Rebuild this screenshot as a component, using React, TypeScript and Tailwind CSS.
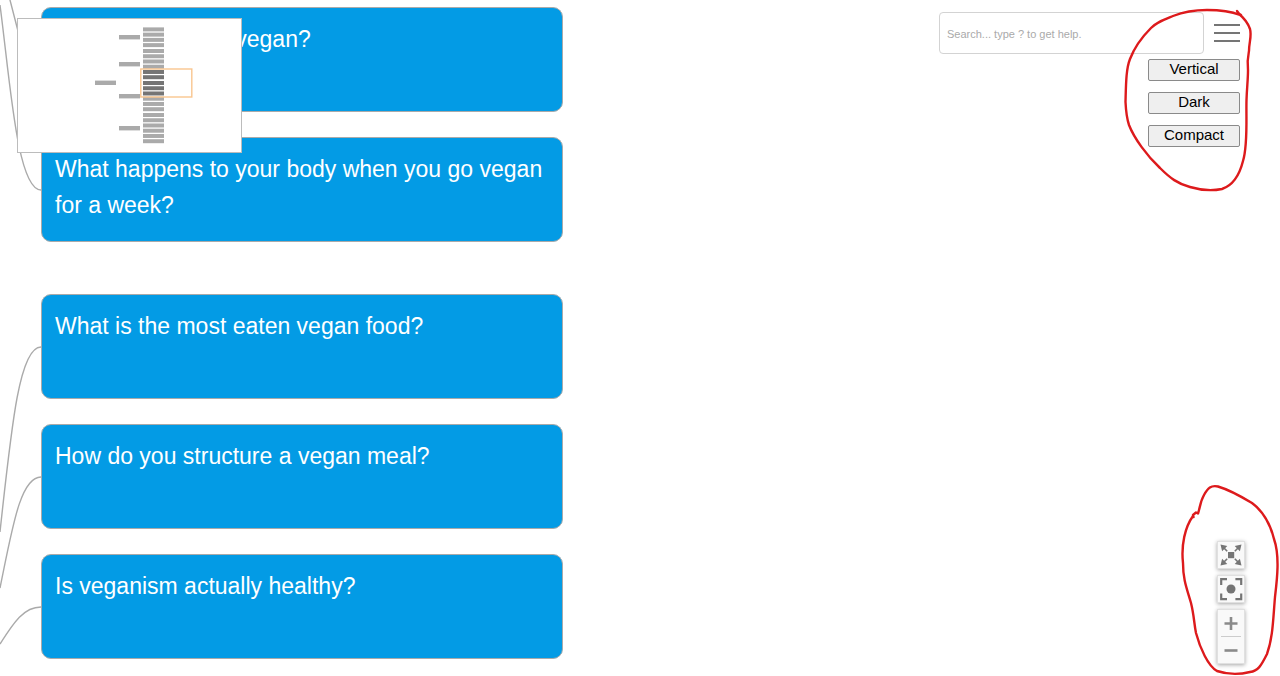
import * as React from "react";

interface QuestionGroup {
    id: string;
    questions: string[];
}

// Questions are grouped by their parent node
const groups: QuestionGroup[] = [
    {
        id: "first",
        questions: [
            "Is it healthy to be vegan?",
            "What happens to your body when you go vegan for a week?",
        ],
    },
    {
        id: "second",
        questions: [
            "What is the most eaten vegan food?",
            "How do you structure a vegan meal?",
            "Is veganism actually healthy?",
        ],
    },
];

const links = [
    "M-4 -50 Q4 -25 10 0 L18 31",
    "M0 5 C10 80 17 190 41 190",
    "M41 347 C20 347 12 420 0 532",
    "M41 477 C20 477 12 530 0 588",
    "M41 607 C24 607 14 622 0 644",
];

// Top edge and number of leaves for each branch of the minimap
const leafGroups = [
    { top: 8.4, count: 4 },
    { top: 30, count: 6 },
    { top: 62, count: 6 },
    { top: 94, count: 6 },
];

const branches = [
    { x: 101, y: 16 },
    { x: 101, y: 43 },
    { x: 77, y: 61.6 },
    { x: 101, y: 75 },
    { x: 101, y: 107 },
];

const layoutOptions = ["Vertical", "Dark", "Compact"];

function Minimap() {
    const leaves = leafGroups.flatMap(({ top, count }) =>
        Array.from({ length: count }, (_, i) => top + i * 5.24)
    );

    return (
        <div className="absolute left-[17px] top-[18px] h-[135px] w-[225px] border border-[#bcbcbc] bg-white">
            <svg viewBox="0 0 223 133" className="size-full" aria-hidden="true">
                {branches.map(({ x, y }) => (
                    <rect key={y} x={x} y={y} width="21" height="4.4" fill="#aaaaaa" />
                ))}
                {leaves.map((y) => (
                    <rect
                        key={y}
                        x="125"
                        y={y}
                        width="21"
                        height="4"
                        fill={y > 50 && y < 75 ? "#757575" : "#aaaaaa"}
                    />
                ))}
                <rect x="122.8" y="50" width="51" height="28" fill="none" stroke="#f9c68f" strokeWidth="1.4" />
            </svg>
        </div>
    );
}

function FitIcon() {
    return (
        <svg viewBox="0 0 26 26" className="size-[26px] shrink-0" fill="#757575" aria-hidden="true">
            <rect x="10" y="10" width="6.2" height="6.2" />
            <path d="M5 5l4.200 4.200M21 5l-4.200 4.200M5 21l4.200-4.200M21 21l-4.200-4.200" stroke="#757575" strokeWidth="1.6" />
            <path d="M2.500 2.500l6.800 1.600-5.200 5.200zM23.500 2.500l-6.800 1.600 5.200 5.200zM2.500 23.500l6.800-1.600-5.200-5.200zM23.500 23.500l-6.800-1.600 5.200-5.200z" />
        </svg>
    );
}

function CenterIcon() {
    return (
        <svg viewBox="0 0 26 26" className="size-[26px] shrink-0" fill="none" aria-hidden="true">
            <circle cx="13" cy="13" r="4.5" fill="#757575" />
            <path
                d="M3.2 9V3.2H9M17.4 3.2h5.8V9M3.2 17.4v5.8H9M23.2 17.4v5.8h-5.8"
                stroke="#757575"
                strokeWidth="2.2"
            />
        </svg>
    );
}

export default function App() {
    return (
        <main
            className="relative flex min-h-screen justify-between overflow-hidden bg-white"
            style={{ fontFamily: '"Liberation Sans", Arial, sans-serif' }}
        >
            <svg className="absolute left-0 top-0 h-full w-[42px]" fill="none" stroke="#aaaaaa" strokeWidth="1.4" aria-hidden="true">
                {links.map((d) => (
                    <path key={d} d={d} />
                ))}
            </svg>

            {/* Question nodes */}
            <div className="flex flex-col gap-[52px] pl-[41px] pt-[7px]">
                {groups.map((group) => (
                    <section key={group.id} className="flex flex-col gap-[25px]">
                        {group.questions.map((question) => (
                            <article
                                key={question}
                                className="min-h-[105px] w-[522px] rounded-[10px] border border-[#aaaaaa] bg-[#039be5] px-[13px] pt-[13px] text-[23px] leading-9 text-white"
                            >
                                {question}
                            </article>
                        ))}
                    </section>
                ))}
            </div>

            <Minimap />

            {/* Search, layout options and zoom tools */}
            <aside className="flex flex-col items-end justify-between pb-3 pt-3">
                <div className="flex flex-col items-end gap-[5px] pr-10">
                    <div className="flex items-center gap-[10px]">
                        <input
                            type="search"
                            aria-label="Search"
                            placeholder="Search... type ? to get help."
                            className="h-[42px] w-[265px] rounded border border-[#d3d3d3] px-[7px] pt-[2px] text-[11px] text-[#757575] placeholder:text-[#aaaaaa]"
                        />
                        <button type="button" aria-label="Menu" className="flex w-[26px] flex-col gap-[6px]">
                            <span className="h-[2px] w-full bg-[#757575]" />
                            <span className="h-[2px] w-full bg-[#757575]" />
                            <span className="h-[2px] w-full bg-[#757575]" />
                        </button>
                    </div>
                    <div className="flex flex-col gap-[11px]">
                        {layoutOptions.map((option) => (
                            <button
                                key={option}
                                type="button"
                                className="h-[22px] w-[92px] rounded-[2px] border border-[#8a8a8a] bg-[#efefef] pb-[2px] text-[15px] leading-[18px] text-black"
                            >
                                {option}
                            </button>
                        ))}
                    </div>
                </div>

                <div className="flex flex-col gap-[6px] pr-[35px]">
                    <button
                        type="button"
                        aria-label="Fit to screen"
                        className="flex size-7 items-center justify-center border border-[#e0e0e0] bg-[#f9f9f9] shadow-[0_1px_4px_rgba(0,0,0,0.35)]"
                    >
                        <FitIcon />
                    </button>
                    <button
                        type="button"
                        aria-label="Center"
                        className="flex size-7 items-center justify-center border border-[#e0e0e0] bg-[#f9f9f9] shadow-[0_1px_4px_rgba(0,0,0,0.35)]"
                    >
                        <CenterIcon />
                    </button>
                    <div className="flex w-7 flex-col items-center border border-[#e0e0e0] bg-[#f9f9f9] shadow-[0_1px_4px_rgba(0,0,0,0.35)]">
                        <button type="button" aria-label="Zoom in" className="h-[26px] w-5">
                            <svg viewBox="0 0 20 26" className="h-[26px] w-5" stroke="#8a8a8a" strokeWidth="2.6" aria-hidden="true">
                                <path d="M3.5 13.5h13M10 7v13" />
                            </svg>
                        </button>
                        <button type="button" aria-label="Zoom out" className="h-[27px] w-5 border-t border-[#cccccc]">
                            <svg viewBox="0 0 20 26" className="h-[26px] w-5" stroke="#8a8a8a" strokeWidth="2.6" aria-hidden="true">
                                <path d="M3.5 13.5h13" />
                            </svg>
                        </button>
                    </div>
                </div>
            </aside>

            {/* Hand-drawn markers */}
            <svg
                viewBox="1100 0 180 200"
                className="pointer-events-none absolute right-0 top-0 h-[200px] w-[180px]"
                fill="none"
                stroke="#dd1a1c"
                strokeWidth="2.4"
                strokeLinecap="round"
                strokeLinejoin="round"
                aria-hidden="true"
            >
                <path d="M1237 11L1240 15C1230 11 1220 10 1207 10C1193 10 1183 12 1173 16C1163 20 1157 22 1151 28C1143 36 1135 46 1130 59C1126 69 1126 84 1125.500 102C1126 112 1127 119 1129 125C1134 138 1147 156 1160 168C1170 178 1178 184 1190 187C1200 190 1212 191 1222 189C1234 185 1240 173 1243 161C1248 145 1246 120 1246.500 100C1247 86 1248 80 1248 70C1247 60 1248 56 1249 51C1249 42 1252 36 1250 29C1248 23 1244 18 1238 13L1241 15" />
            </svg>
            <svg
                viewBox="1170 476 110 200"
                className="pointer-events-none absolute bottom-0 right-0 h-[200px] w-[110px]"
                fill="none"
                stroke="#dd1a1c"
                strokeWidth="2.4"
                strokeLinecap="round"
                strokeLinejoin="round"
                aria-hidden="true"
            >
                <path d="M1193.500 517L1193 515L1196 512.500L1198 513.500C1200 508 1200 502 1204 495C1208 488 1211 485 1218 486.500C1230 490 1242 497 1252 503C1264 512 1271 527 1274 539C1280 556 1277 580 1275 597C1273 620 1273 637 1267 654C1261 666 1258 671 1250 672C1238 675 1226 674 1217 671C1208 666 1200 648 1196 633C1194 623 1194 615 1191 603C1187 589 1183 580 1183 563C1181 545 1185 527 1193 516" />
            </svg>
        </main>
    );
}
